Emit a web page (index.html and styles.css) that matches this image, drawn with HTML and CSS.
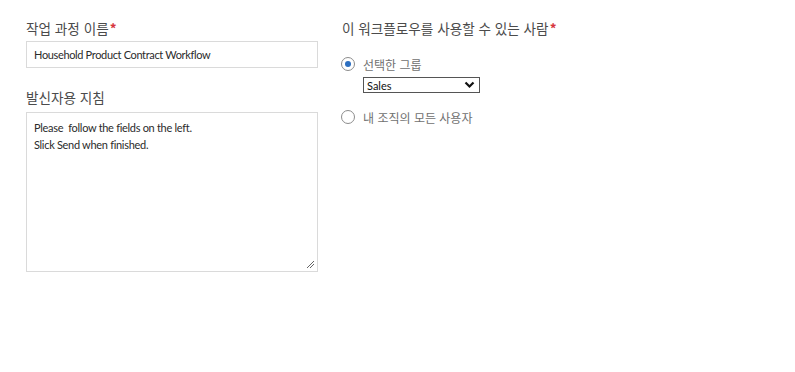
FILE: index.html
```html
<!DOCTYPE html>
<html lang="ko">
<head>
<meta charset="utf-8">
<link rel="stylesheet" href="styles.css">
</head>
<body>
<div class="page">
  <div class="col left">
    <div class="field">
      <div class="label">작업 과정 이름<span class="req">*</span></div>
      <div class="input">Household Product Contract Workflow</div>
    </div>
    <div class="field">
      <div class="label">발신자용 지침</div>
      <div class="textarea">
        <div>Please&nbsp; follow the fields on the left.</div>
        <div>Slick Send when finished.</div>
        <svg class="grip" width="9" height="9" viewBox="0 0 9 9"><path d="M8 1 L1 8 M8 4 L4 8" stroke="#666" stroke-width="1"/></svg>
      </div>
    </div>
  </div>
  <div class="col right">
    <div class="label">이 워크플로우를 사용할 수 있는 사람<span class="req">*</span></div>
    <div class="option">
      <span class="radio checked"></span>
      <span class="opt-text">선택한 그룹</span>
    </div>
    <div class="select">
      <span>Sales</span>
      <svg width="11" height="8" viewBox="0 0 11 8"><path d="M1.5 1.5 L5.5 5.5 L9.5 1.5" stroke="#111" stroke-width="2.2" fill="none"/></svg>
    </div>
    <div class="option second">
      <span class="radio"></span>
      <span class="opt-text">내 조직의 모든 사용자</span>
    </div>
  </div>
</div>
</body>
</html>
```
FILE: styles.css
```css
html, body {
  margin: 0;
  padding: 0;
  background: #fff;
}
body {
  font-family: "Lato", "Noto Sans CJK KR", sans-serif;
  color: #222;
}
.page {
  display: flex;
  padding: 19px 0 0 26px;
}
.col.left {
  width: 292px;
}
.col.right {
  margin-left: 24px;
}
.field + .field {
  margin-top: 20px;
}
.label {
  font-family: "Noto Sans CJK KR", sans-serif;
  font-size: 13.6px;
  line-height: 19px;
  color: #4b4b4b;
  height: 19px;
}
.req {
  color: #d7373f;
  margin-left: 1px;
  font-weight: 700;
}
.input {
  margin-top: 3px;
  height: 27px;
  box-sizing: border-box;
  border: 1px solid #dadada;
  font-size: 11px;
  letter-spacing: -0.35px;
  line-height: 25px;
  padding-left: 7px;
  color: #2b2b2b;
}
.textarea {
  position: relative;
  margin-top: 5px;
  height: 160px;
  box-sizing: border-box;
  border: 1px solid #dadada;
  font-size: 11px;
  letter-spacing: -0.3px;
  line-height: 17px;
  padding: 6px 7px;
  color: #2b2b2b;
}
.grip {
  position: absolute;
  right: 2px;
  bottom: 2px;
}
.option {
  display: flex;
  align-items: center;
  margin-top: 18px;
  margin-left: -1px;
  height: 16px;
}
.option.second {
  margin-top: 16px;
}
.radio {
  width: 14px;
  height: 14px;
  box-sizing: border-box;
  border: 1px solid #8c8c8c;
  border-radius: 50%;
  display: inline-flex;
  align-items: center;
  justify-content: center;
  background: #fff;
}
.radio.checked::after {
  content: "";
  width: 6px;
  height: 6px;
  border-radius: 50%;
  background: #2d6fc0;
}
.opt-text {
  font-family: "Noto Sans CJK KR", sans-serif;
  font-size: 12px;
  color: #707070;
  margin-left: 8px;
}
.select {
  margin-top: 5px;
  margin-left: 21px;
  width: 117px;
  height: 16px;
  box-sizing: border-box;
  border: 1px solid #555;
  display: flex;
  align-items: center;
  justify-content: space-between;
  padding: 0 4px 0 3px;
  font-size: 11px;
  color: #111;
}
```
